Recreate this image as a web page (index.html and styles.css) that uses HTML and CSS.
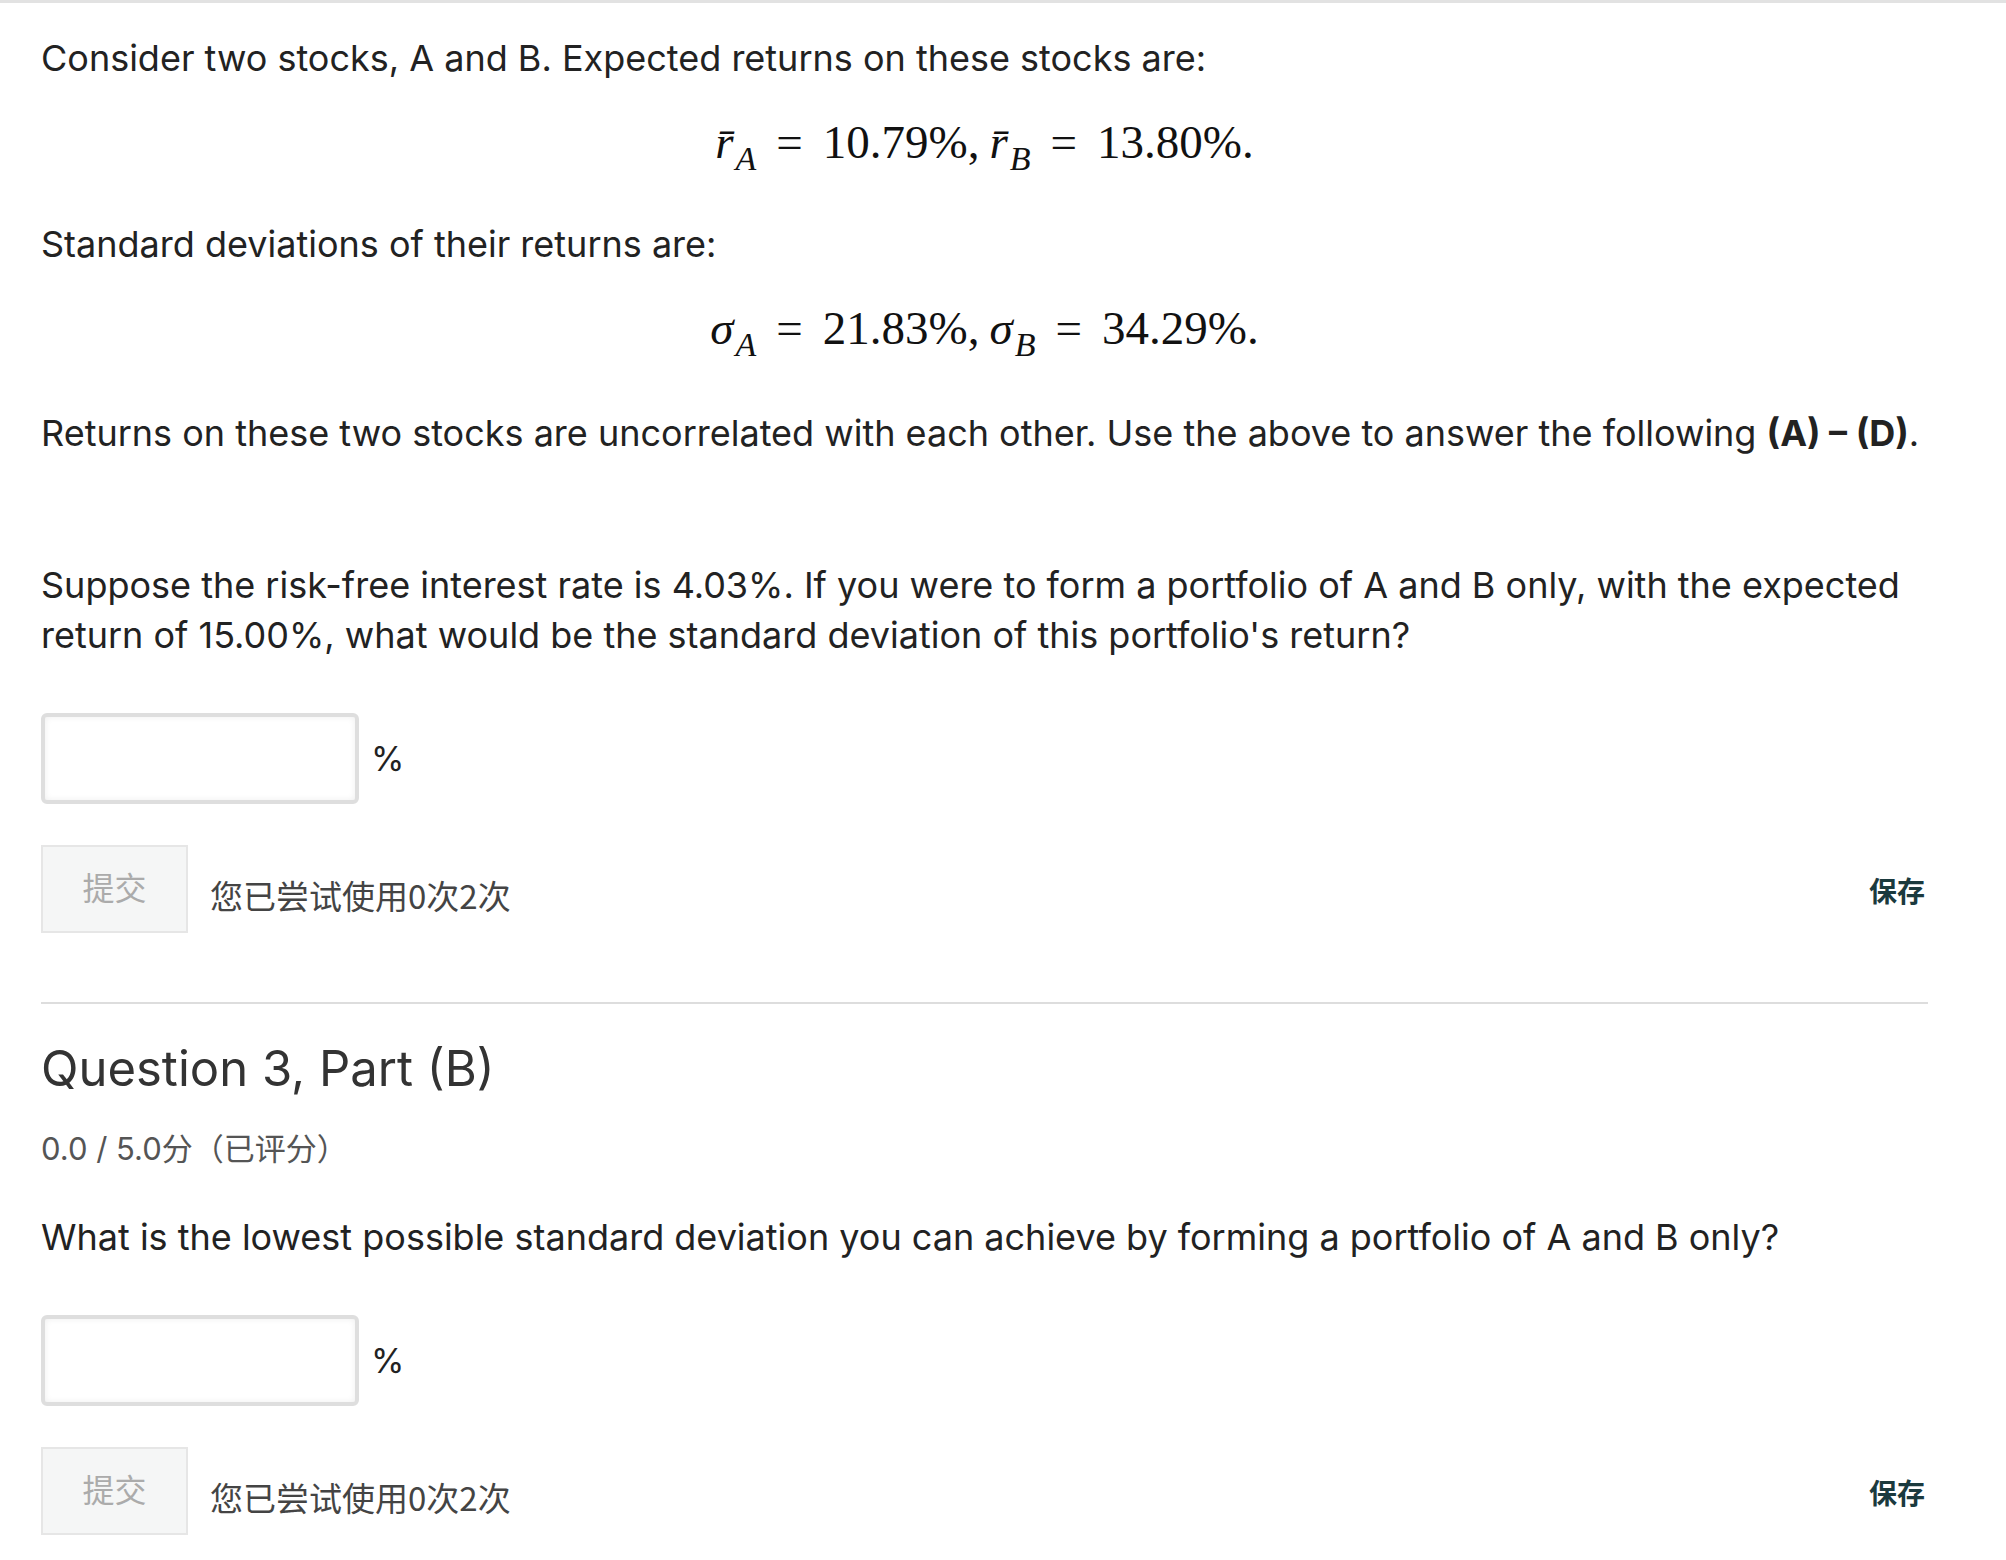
FILE: index.html
```html
<!DOCTYPE html>
<html lang="zh-CN">
<head>
    <meta charset="UTF-8">
    <title>Question 3</title>
    <link rel="stylesheet" href="styles.css">
</head>
<body>
    <div class="page">
        <div class="intro">
            <p>Consider two stocks, A and B. Expected returns on these stocks are:</p>
            <div class="math">
                <span class="mi">r&#x0304;</span><sub>A</sub><span class="mo">=</span>10.79%<span class="sep">,</span><span class="mi">r&#x0304;</span><sub>B</sub><span class="mo">=</span>13.80%.
            </div>
            <p>Standard deviations of their returns are:</p>
            <div class="math last">
                <span class="mi">σ</span><sub>A</sub><span class="mo">=</span>21.83%<span class="sep">,</span><span class="mi">σ</span><sub>B</sub><span class="mo">=</span>34.29%.
            </div>
            <p>Returns on these two stocks are uncorrelated with each other. Use the above to answer the following <strong>(A) – (D)</strong>.</p>
        </div>

        <div class="problem first">
            <p>Suppose the risk-free interest rate is 4.03%. If you were to form a portfolio of A and B only, with the expected return of 15.00%, what would be the standard deviation of this portfolio's return?</p>
            <div class="answer">
                <input type="text" class="answer-input">
                <span class="unit">%</span>
            </div>
            <div class="actions">
                <button class="submit-btn" disabled>提交</button>
                <span class="attempts">您已尝试使用0次2次</span>
                <a class="save-link" href="#">保存</a>
            </div>
        </div>

        <div class="problem second">
            <h3 class="problem-title">Question 3, Part (B)</h3>
            <div class="score">0.0 / 5.0分（已评分）</div>
            <p class="ask">What is the lowest possible standard deviation you can achieve by forming a portfolio of A and B only?</p>
            <div class="answer">
                <input type="text" class="answer-input">
                <span class="unit">%</span>
            </div>
            <div class="actions">
                <button class="submit-btn" disabled>提交</button>
                <span class="attempts">您已尝试使用0次2次</span>
                <a class="save-link" href="#">保存</a>
            </div>
        </div>
    </div>
</body>
</html>
```

FILE: styles.css
```css
body {
    margin: 0;
    border-top: 3px solid #e2e2e2;
    font-family: Inter, "Noto Sans CJK SC", sans-serif;
    color: #222;
    background: #fff;
}
.page {
    padding: 30px 78px 0 41px;
}
p {
    margin: 0;
    font-size: 36px;
    line-height: 50px;
}
strong {
    font-weight: 700;
}
.math {
    margin: 29px 0 47px;
    text-align: center;
    font-family: "Liberation Serif", serif;
    font-size: 47px;
    line-height: 60px;
    color: #111;
}
.math.last {
    margin-bottom: 50px;
}
.math .mi {
    font-style: italic;
}
.math sub {
    font-style: italic;
    font-size: 34px;
    vertical-align: -12px;
    line-height: 0;
    margin-left: 2px;
}
.math .mo {
    margin: 0 20px;
}
.math .sep {
    margin-right: 10px;
}
.problem.first {
    margin-top: 102px;
}
.answer {
    display: flex;
    align-items: center;
    margin-top: 53px;
}
.answer-input {
    width: 318px;
    height: 91px;
    box-sizing: border-box;
    border: 4px solid #dedede;
    border-radius: 6px;
    box-shadow: inset 0 0 6px rgba(0, 0, 0, 0.07);
    background: #fff;
    margin: 0;
}
.unit {
    margin-left: 12px;
    font-size: 34px;
    line-height: 50px;
}
.actions {
    display: flex;
    align-items: center;
    margin-top: 41px;
}
.submit-btn {
    width: 147px;
    height: 88px;
    box-sizing: border-box;
    border: 2px solid #e6e6e6;
    background: #f5f6f6;
    color: #ababab;
    font-family: "Noto Sans CJK SC", sans-serif;
    font-size: 32px;
    padding: 0 0 6px;
    margin: 0;
}
.attempts {
    margin-left: 22px;
    padding-top: 12px;
    font-family: "Noto Sans CJK SC", sans-serif;
    font-size: 33px;
    line-height: 50px;
    color: #444;
}
.save-link {
    margin-left: auto;
    margin-right: 3px;
    padding-top: 2px;
    font-size: 28px;
    font-weight: 700;
    color: #1b3a3e;
    text-decoration: none;
}
.problem.second {
    margin-top: 69px;
    border-top: 2px solid #dddddd;
}
.problem-title {
    margin: 35px 0 0;
    font-size: 49px;
    line-height: 60px;
    font-weight: 400;
    color: #333;
}
.score {
    margin-top: 30px;
    font-size: 31px;
    line-height: 40px;
    color: #555;
}
.ask {
    margin-top: 43px;
}
```
